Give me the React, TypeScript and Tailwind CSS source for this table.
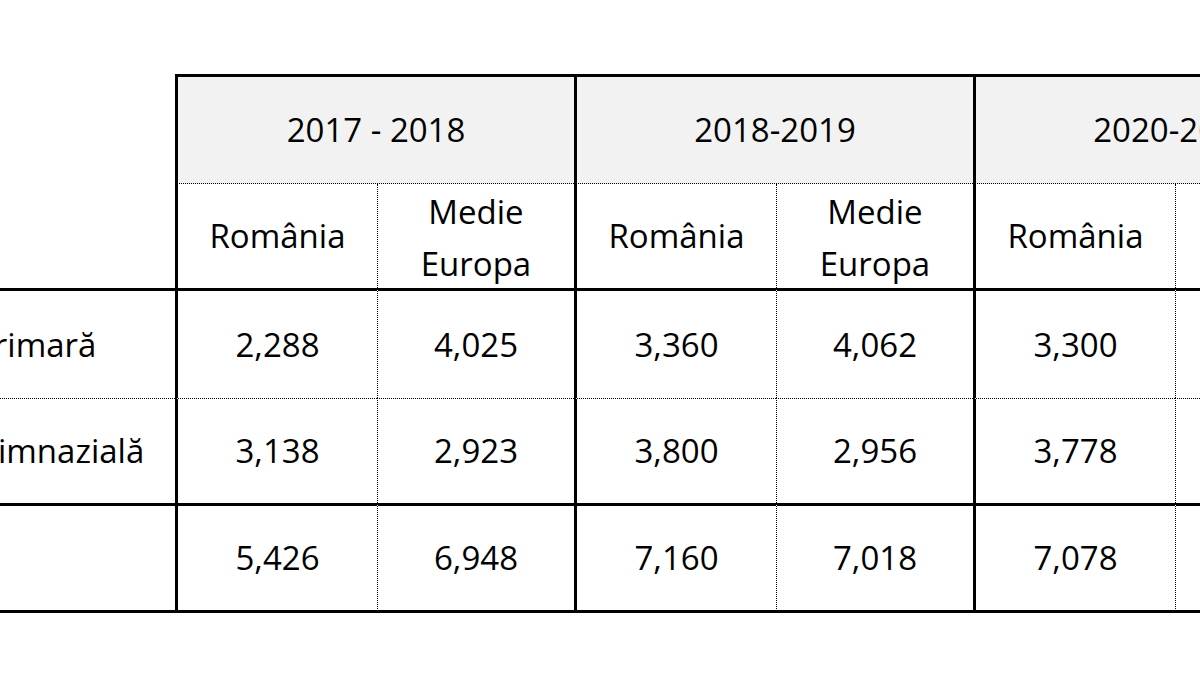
import React from "react";

type Group = { title: string; vals: [string, string][] };

const groups: Group[] = [
  {
    title: "2017 - 2018",
    vals: [
      ["2,288", "4,025"],
      ["3,138", "2,923"],
      ["5,426", "6,948"],
    ],
  },
  {
    title: "2018-2019",
    vals: [
      ["3,360", "4,062"],
      ["3,800", "2,956"],
      ["7,160", "7,018"],
    ],
  },
  {
    title: "2020-2021",
    vals: [
      ["3,300", "4,051"],
      ["3,778", "2,987"],
      ["7,078", "7,038"],
    ],
  },
];

const labels = ["Primară", "Gimnazială", ""];

const rowCls = [
  "h-[110px] border-t-[3px] border-black",
  "h-[105px] [border-top:1px_dotted_#000]",
  "h-[110px] border-t-[3px] border-b-[3px] border-black",
];

export default function App() {
  return (
    <div
      className="w-[1200px] h-[675px] overflow-hidden bg-white text-black"
      style={{ fontFamily: '"Open Sans", "Noto Sans", sans-serif' }}
    >
      <div className="mt-[74px] ml-[-60px] w-max text-[33px]">
        {/* header */}
        <div className="flex">
          <div className="w-[235px] h-[214px] shrink-0" />
          {groups.map((g) => (
            <div key={g.title} className="w-[399px] shrink-0 flex flex-col">
              <div className="h-[110px] border-t-[3px] border-l-[3px] border-black [border-bottom:1px_dotted_#000] bg-[#f2f2f2] flex items-center justify-center">
                {g.title}
              </div>
              <div className="flex h-[104px] leading-[52px] text-center">
                <div className="w-[202px] border-l-[3px] border-black flex items-center justify-center">
                  România
                </div>
                <div className="w-[197px] pt-[4px] [border-left:1px_dotted_#000] flex items-center justify-center">
                  Medie
                  <br />
                  Europa
                </div>
              </div>
            </div>
          ))}
        </div>
        {/* body */}
        {labels.map((label, r) => (
          <div key={r} className="flex">
            <div
              className={`w-[235px] shrink-0 flex items-center pl-[34px] ${rowCls[r]}`}
            >
              {label}
            </div>
            {groups.map((g) => (
              <div key={g.title} className="w-[399px] shrink-0 flex">
                <div
                  className={`w-[202px] flex items-center justify-center border-l-[3px] border-l-black ${rowCls[r]}`}
                >
                  {g.vals[r][0]}
                </div>
                <div
                  className={`w-[197px] flex items-center justify-center [border-left:1px_dotted_#000] ${rowCls[r]}`}
                >
                  {g.vals[r][1]}
                </div>
              </div>
            ))}
          </div>
        ))}
      </div>
    </div>
  );
}
